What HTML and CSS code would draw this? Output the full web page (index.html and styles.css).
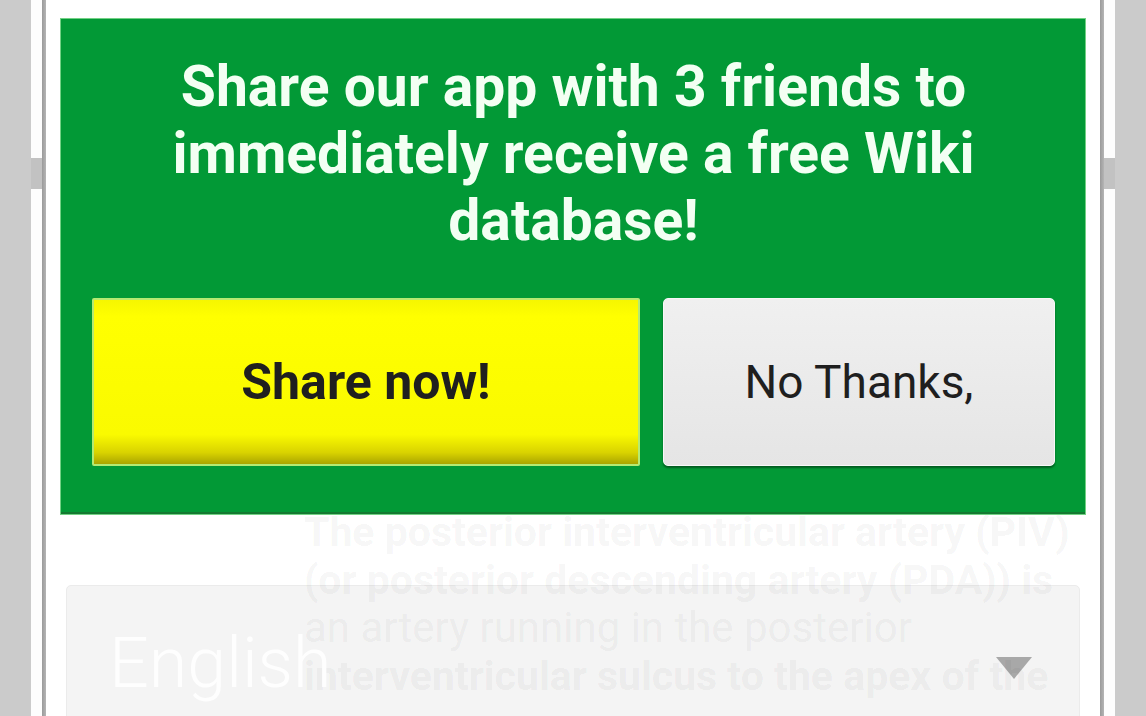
FILE: index.html
```html
<!DOCTYPE html>
<html lang="en">
<head>
  <meta charset="UTF-8">
  <meta name="viewport" content="width=device-width, initial-scale=1.0">
  <title>Wiki App - Share</title>
  <link rel="stylesheet" href="styles.css">
</head>
<body>
  <div class="device">
    <div class="bezel"></div>
    <div class="rail">
      <div class="rail-top"></div>
      <div class="rail-notch"></div>
      <div class="rail-bottom"></div>
    </div>
    <div class="edge"></div>

    <div class="screen">
      <!-- Share promo dialog -->
      <div class="promo">
        <h1>Share our app with 3 friends to immediately receive a free Wiki database!</h1>
        <div class="promo-actions">
          <button class="share-btn">Share now!</button>
          <button class="dismiss-btn">No Thanks,</button>
        </div>
      </div>

      <!-- Article text fading in behind the dialog -->
      <div class="article-ghost">
        <p class="bold">The posterior interventricular artery (PIV)</p>
        <p class="bold">(or posterior descending artery (PDA)) is</p>
        <p>an artery running in the posterior</p>
        <p class="bold">interventricular sulcus to the apex of the</p>
      </div>

      <div class="lang-select">
        <span class="lang-label">English</span>
        <svg class="lang-arrow" width="36" height="22" viewBox="0 0 36 22">
          <path d="M0 0 L36 0 L18 22 Z" fill="#a8a8a8"/>
        </svg>
      </div>
    </div>

    <div class="edge"></div>
    <div class="rail">
      <div class="rail-top"></div>
      <div class="rail-notch"></div>
      <div class="rail-bottom"></div>
    </div>
    <div class="bezel"></div>
  </div>
</body>
</html>
```

FILE: styles.css
```css
body {
  margin: 0;
  height: 716px;
  overflow: hidden;
  background-color: #cbcbcb;
  font-family: Roboto, 'Liberation Sans', sans-serif;
}

.device {
  display: flex;
  height: 716px;
}

.bezel {
  width: 31px;
  background-color: #cbcbcb;
}

.rail {
  width: 11px;
  display: flex;
  flex-direction: column;
}

.rail-top {
  height: 158px;
  background-color: #fdfdfd;
}

.rail-notch {
  height: 31px;
  background-color: #c2c2c2;
}

.rail-bottom {
  flex: 1;
  background-color: #fdfdfd;
}

.edge {
  width: 4px;
  background: linear-gradient(to right, #9a9a9a, #b5b5b5);
}

.screen {
  flex: 1;
  position: relative;
  background-color: #fff;
  padding: 18px 14px 0 14px;
}

/* Promo dialog */
.promo {
  position: relative;
  z-index: 2;
  height: 497px;
  box-sizing: border-box;
  background-color: #029936;
  border: 1px solid #72d184;
  box-shadow: inset 0 -2px 0 #147a31;
  padding: 0 30px 0 31px;
}

.promo h1 {
  margin: 0;
  padding: 34px 40px 0;
  color: #f3fff3;
  font-size: 57px;
  font-weight: 700;
  line-height: 67px;
  text-align: center;
}

.promo-actions {
  display: flex;
  gap: 23px;
  margin-top: 44px;
}

.share-btn, .dismiss-btn {
  height: 168px;
  font-family: Roboto, 'Liberation Sans', sans-serif;
  color: #1f1f1f;
  cursor: pointer;
}

.share-btn {
  width: 548px;
  font-size: 50px;
  font-weight: 700;
  border: 2px solid #b5ea72;
  border-radius: 2px;
  background: linear-gradient(#f6f600 0%, #ffff00 10%, #fafa00 82%, #d9d300 93%, #aaa500 100%);
}

.dismiss-btn {
  flex: 1;
  font-size: 46px;
  font-weight: 400;
  border: 1px solid #f8f8f8;
  border-radius: 5px;
  background: linear-gradient(#f0f0f0, #e5e5e5);
  box-shadow: 0 2px 2px rgba(0, 0, 0, 0.4);
}

/* Faded article text */
.article-ghost {
  position: absolute;
  z-index: 1;
  left: 258px;
  top: 508px;
  color: rgba(0, 0, 0, 0.055);
  font-size: 41px;
  line-height: 48px;
  white-space: nowrap;
}

.article-ghost p {
  margin: 0;
}

.article-ghost p:nth-child(3) {
  font-size: 42px;
}

.article-ghost .bold {
  font-weight: 700;
}

/* Language dropdown */
.lang-select {
  display: flex;
  align-items: center;
  justify-content: space-between;
  height: 200px;
  margin: 70px 6px 0 6px;
  padding: 0 47px 0 42px;
  background-color: #f4f4f4;
  border: 1px solid #ebebeb;
  border-radius: 5px;
}

.lang-label {
  position: relative;
  z-index: 2;
  margin-top: -46px;
  color: #fefefe;
  font-size: 70px;
  font-weight: 300;
}

.lang-arrow {
  margin-top: -36px;
}
```
